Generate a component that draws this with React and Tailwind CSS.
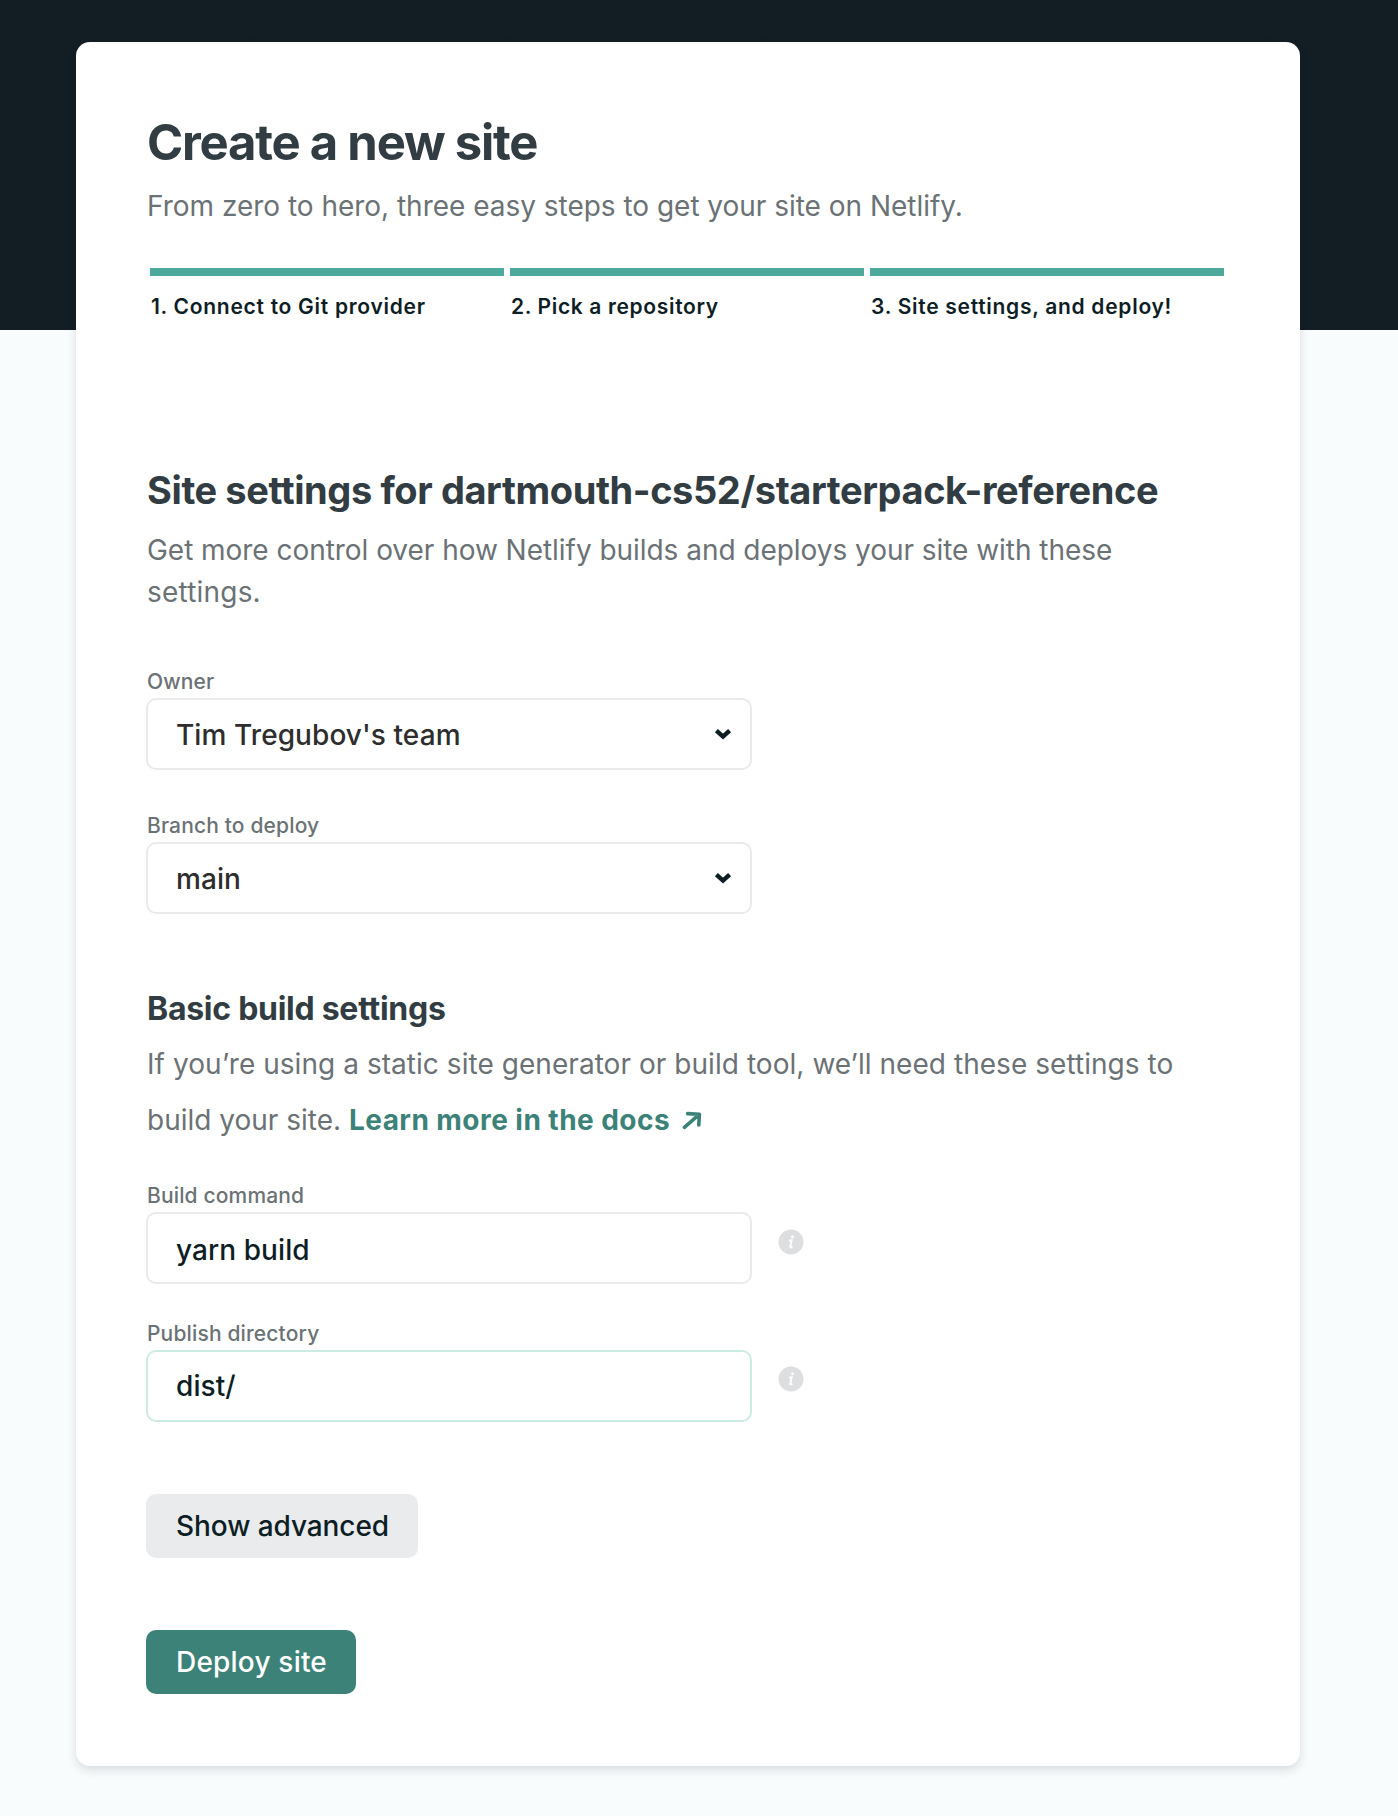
const steps = [
  { label: "1. Connect to Git provider", spacing: "tracking-[0.72px]" },
  { label: "2. Pick a repository", spacing: "tracking-[0.65px]" },
  { label: "3. Site settings, and deploy!", spacing: "tracking-[0.72px]" },
];

function Label({ children, className = "" }) {
  return (
    <div className={`h-[30px] pt-[1px] pl-[1px] text-[21px] leading-[30px] font-medium tracking-[0.15px] text-[#6b7275] whitespace-nowrap ${className}`}>
      {children}
    </div>
  );
}

function Select({ value }) {
  return (
    <div className="mt-[2px] flex h-[72px] w-[606px] items-center justify-between rounded-[10px] border-2 border-[#e9ebeb] bg-white pl-[28px] pr-[18px]">
      <span className="pt-[2px] text-[28px] leading-[42px] font-medium tracking-[0.08px] text-[#2d2d2d] whitespace-nowrap">{value}</span>
      <svg className="h-[12px] w-[18px]" viewBox="0 0 18 12" fill="none">
        <path d="M2.4 2.6 L9 8.6 L15.6 2.6" stroke="#0e1e25" strokeWidth="4.4" />
      </svg>
    </div>
  );
}

function Info({ className }) {
  return (
    <svg className={`ml-[26px] h-[26px] w-[26px] ${className}`} viewBox="0 0 26 26">
      <circle cx="13" cy="13" r="12.5" fill="#dcdee0" />
      <circle cx="14.6" cy="7.8" r="1.5" fill="#fff" />
      <path d="M11 11.6 L13.7 11.2 L12.2 18 Q12.2 19 14.4 17.8" fill="none" stroke="#fff" strokeWidth="1.9" />
    </svg>
  );
}

function Field({ value, border, pad, info }) {
  return (
    <div className="mt-[2px] flex h-[72px]">
      <div className={`flex h-[72px] w-[606px] items-center rounded-[10px] border-2 bg-white pl-[28px] ${border} ${pad}`}>
        <span className="text-[28px] leading-[42px] font-medium tracking-[0.08px] text-[#0e1e25] whitespace-nowrap">{value}</span>
      </div>
      <Info className={info} />
    </div>
  );
}

export default function App() {
  return (
    <div className="h-[1816px] w-[1398px] overflow-hidden bg-linear-to-b from-[#121e24] from-[330px] to-[#f9fcfd] to-[330px] pt-[42px] pl-[76px] font-['Inter',sans-serif]">
      <main className="h-[1724px] w-[1224px] rounded-[14px] bg-white px-[70px] pt-[72px] shadow-[0_4px_10px_rgba(14,30,37,0.14)]">
        <h1 className="h-[58px] pl-[1px] text-[49px] leading-[58px] font-bold tracking-[-1.23px] text-[#313d42] whitespace-nowrap">
          Create a new site
        </h1>
        <p className="mt-[13px] pl-[1px] text-[28px] leading-[42px] tracking-[-0.02px] text-[#6b7275] whitespace-nowrap">
          From zero to hero, three easy steps to get your site on Netlify.
        </p>
        <ol className="mt-[41px] ml-[4px] grid w-[1074px] grid-cols-3 gap-[6px]">
          {steps.map((step) => (
            <li key={step.label} className="border-t-8 border-[#4da99c]">
              <span className={`mt-[15px] block pl-[1px] text-[21px] leading-[32px] font-semibold text-[#0e1e25] whitespace-nowrap ${step.spacing}`}>
                {step.label}
              </span>
            </li>
          ))}
        </ol>

        <h2 className="mt-[143px] pl-[1px] text-[38px] leading-[48px] font-bold tracking-[-0.4px] text-[#313d42] whitespace-nowrap">
          Site settings for dartmouth-cs52/starterpack-reference
        </h2>
        <p className="mt-[15px] pl-[1px] text-[28px] leading-[42px] tracking-[-0.04px] text-[#6b7275] whitespace-nowrap">
          Get more control over how Netlify builds and deploys your site with these
          <br />
          <span className="tracking-[0.2px]">settings.</span>
        </p>
        <Label className="mt-[53px]">Owner</Label>
        <Select value="Tim Tregubov's team" />
        <Label className="mt-[40px]">Branch to deploy</Label>
        <Select value="main" />

        <h3 className="mt-[75px] pl-[1px] text-[32px] leading-[40px] font-bold tracking-[-0.27px] text-[#313d42] whitespace-nowrap">
          Basic build settings
        </h3>
        <p className="mt-[7px] pl-[1px] text-[28px] leading-[56px] text-[#6b7275] whitespace-nowrap">
          <span className="tracking-[0.05px]">If you’re using a static site generator or build tool, we’ll need these settings to</span>
          <br />
          build your site.{" "}
          <a className="font-bold tracking-[0.45px] text-[#3c8279]">
            Learn more in the docs
            <svg className="ml-[12px] inline-block h-[20px] w-[20px] align-[0px]" viewBox="0 0 20 20" fill="none">
              <path d="M5.6 3.6 L17.4 4.2 L16.8 15 M17 4.6 L2.4 17.4" stroke="#3c8279" strokeWidth="3.6" strokeLinecap="round" strokeLinejoin="round" />
            </svg>
          </a>
        </p>
        <Label className="mt-[32px]">Build command</Label>
        <Field value="yarn build" border="border-[#e9ebeb]" pad="pt-[4px]" info="mt-[17px]" />
        <Label className="mt-[34px]">Publish directory</Label>
        <Field value="dist/" border="border-[#ccebe5]" pad="pt-0" info="mt-[16px]" />

        <button className="mt-[72px] block h-[64px] w-[272px] rounded-[10px] bg-[#e9ebed] pl-[30px] text-left text-[28px] leading-[64px] font-medium tracking-[-0.08px] text-[#0e1e25] whitespace-nowrap">
          Show advanced
        </button>
        <button className="mt-[72px] block h-[64px] w-[210px] rounded-[10px] bg-[#3c8279] pl-[30px] text-left text-[28px] leading-[64px] font-medium tracking-[0.2px] text-white whitespace-nowrap">
          Deploy site
        </button>
      </main>
    </div>
  );
}
